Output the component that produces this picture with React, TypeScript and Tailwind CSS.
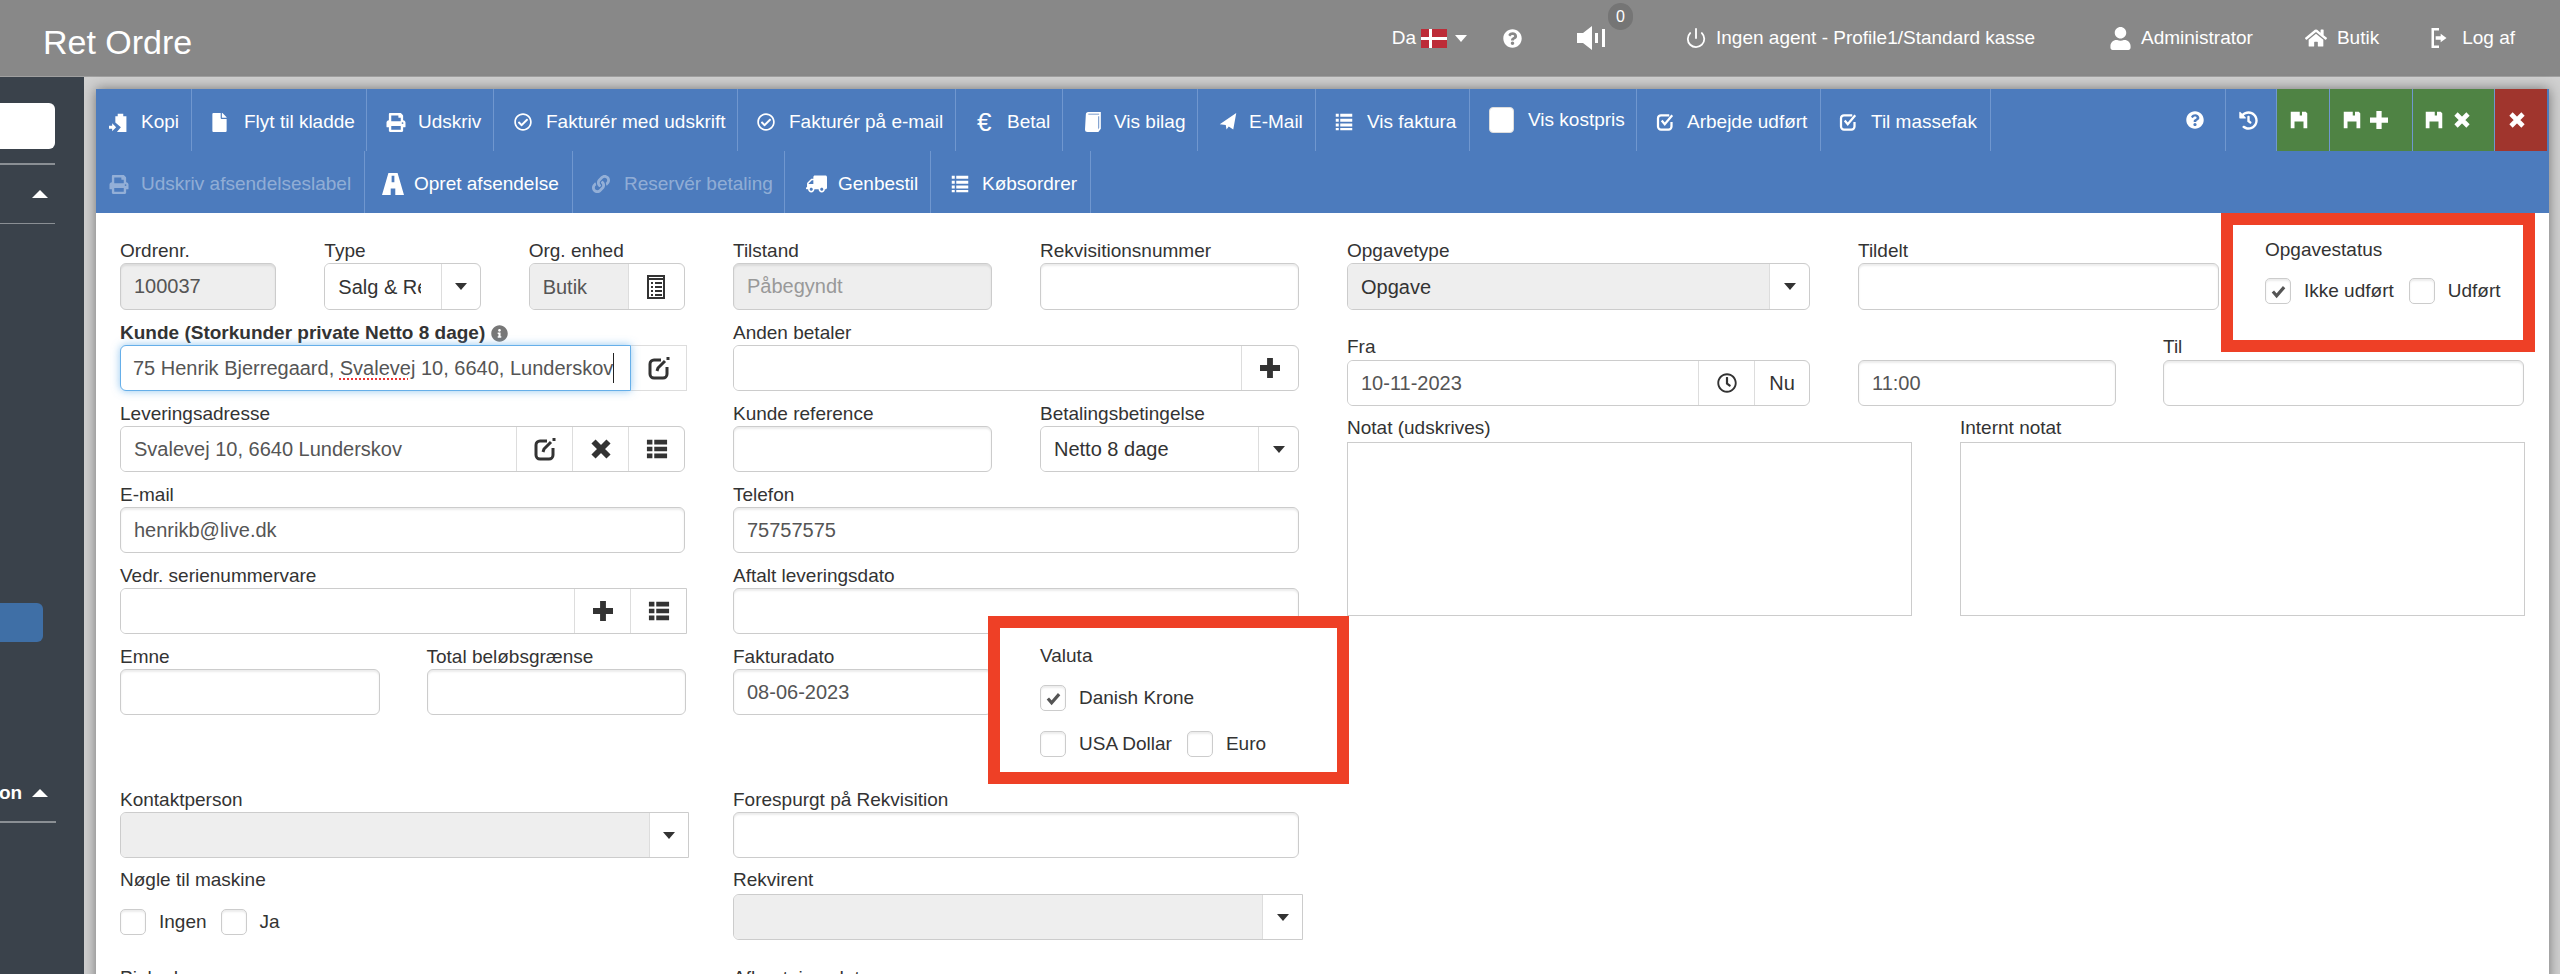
import React from "react";
import {
  FaFile, FaPrint, FaRegCheckCircle, FaLink, FaTruck, FaQuestionCircle,
  FaHistory, FaUser, FaHome, FaInfoCircle, FaRegClock,
} from "react-icons/fa";
import { Power } from "lucide-react";

type IconProps = { className?: string };

const Floppy = ({ className }: IconProps) => (
  <svg viewBox="0 0 24 24" className={className} fill="currentColor">
    <path fillRule="evenodd" d="M1 1h20l2 2v20h-5v-9H6v9H1zM13 1v5h3V1z" />
  </svg>
);
const Clip = ({ className }: IconProps) => (
  <svg viewBox="0 0 24 24" className={className} fill="currentColor">
    <path d="M8 4h3V1h7v3h4v20H10l5-6-7-6zM0 16h4v-3l5 5-5 5v-3H0z" />
  </svg>
);
const Book = ({ className }: IconProps) => (
  <svg viewBox="0 0 20 24" className={className} fill="currentColor">
    <path fillRule="evenodd" d="M2 3a3 3 0 0 1 3-3h15v20l-3 4H4a3 3 0 0 1-3-3zM18 2H5v1h13zM18 5v14l-1 2V5z" />
  </svg>
);
const Road = ({ className }: IconProps) => (
  <svg viewBox="0 0 24 24" className={className} fill="currentColor">
    <path fillRule="evenodd" d="M7 0h10l7 24h-9.500v-7h-5v7H0zM10.500 3h3v7h-3z" />
  </svg>
);
const Send = ({ className }: IconProps) => (
  <svg viewBox="0 0 24 24" className={className} fill="currentColor">
    <path d="M23 0 L1 15 L9 16 L10 22 L13 18 L19 22 Z" />
  </svg>
);
const Lines = ({ className }: IconProps) => (
  <svg viewBox="0 0 24 24" className={className} fill="currentColor">
    <path d="M1 1h4v4H1zM7 1h16v4H7zM1 7.500h4v4H1zM7 7.500h16v4H7zM1 14h4v4H1zM7 14h16v4H7zM1 20h4v3H1zM7 20h16v3H7z" />
  </svg>
);
const ThList = ({ className }: IconProps) => (
  <svg viewBox="0 0 24 24" className={className} fill="currentColor">
    <path d="M1 2h6v5H1zM9 2h14v5H9zM1 9.500h6v5H1zM9 9.500h14v5H9zM1 17h6v5H1zM9 17h14v5H9z" />
  </svg>
);
const CheckBoxIcon = ({ className }: IconProps) => (
  <svg viewBox="0 0 24 24" className={className} fill="none" stroke="currentColor" strokeWidth="3">
    <path d="M17 3H6a4 4 0 0 0-4 4v11a4 4 0 0 0 4 4h10a4 4 0 0 0 4-4v-6" />
    <path d="M7 10l4 5 10-12" />
  </svg>
);
const EditIcon = ({ className }: IconProps) => (
  <svg viewBox="0 0 24 24" className={className} fill="none" stroke="currentColor" strokeWidth="3">
    <path d="M14 4H7a4 4 0 0 0-4 4v10a4 4 0 0 0 4 4h9a4 4 0 0 0 4-4v-7" />
    <path d="M10 15l1-3 7-7" />
    <path d="M21 1v3" />
  </svg>
);
const OrgIcon = ({ className }: IconProps) => (
  <svg viewBox="0 0 20 24" className={className} fill="none" stroke="currentColor" strokeWidth="2">
    <path d="M2 1h16v22H2z" />
    <path d="M2 4h16M5 8h2M9 8h7M5 12h2M9 12h7M5 16h2M9 16h7M5 20h2M9 20h7" />
  </svg>
);
const Speaker = ({ className }: IconProps) => (
  <svg viewBox="0 0 28 24" className={className} fill="currentColor">
    <path d="M0 7h6l9-7v24l-9-7H0zM18 7h3v10h-3zM25 3h3v18h-3z" />
  </svg>
);
const LogOut = ({ className }: IconProps) => (
  <svg viewBox="0 0 24 24" className={className} fill="currentColor">
    <path d="M3 0h9v3H6v18h6v3H3zM14 7l7 5-7 5v-3H8v-4h6z" />
  </svg>
);
const XIcon = ({ className }: IconProps) => (
  <svg viewBox="0 0 24 24" className={className} fill="none" stroke="currentColor" strokeWidth="7">
    <path d="M3 3l18 18M21 3L3 21" />
  </svg>
);
const PlusIcon = ({ className }: IconProps) => (
  <svg viewBox="0 0 24 24" className={className} fill="none" stroke="currentColor" strokeWidth="7">
    <path d="M12 0v24M0 12h24" />
  </svg>
);
const Tick = ({ className }: IconProps) => (
  <svg viewBox="0 0 24 24" className={className} fill="none" stroke="currentColor" strokeWidth="5">
    <path d="M3 12l6 7L21 5" />
  </svg>
);
const Caret = ({ className = "border-t-[#333]" }: IconProps) => (
  <span className={`block w-0 h-0 border-x-[6px] border-x-transparent border-t-[7px] ${className}`} />
);
const CaretUp = () => <span className="block w-0 h-0 border-x-[8px] border-x-transparent border-b-[8px] border-b-white" />;

type Tool = { w: string; pl: string; label: string; icon: React.ReactNode; muted?: boolean; slot?: string };

const row1: Tool[] = [
  { w: "w-[96px]", pl: "pl-[13px]", label: "Kopi", icon: <Clip className="w-[19px] h-[19px]" /> },
  { w: "w-[175px]", pl: "pl-[20px]", label: "Flyt til kladde", icon: <FaFile className="w-[15px] h-[19px]" /> },
  { w: "w-[127px]", pl: "pl-[19px]", label: "Udskriv", icon: <FaPrint className="w-[20px] h-[19px]" /> },
  { w: "w-[244px]", pl: "pl-[20px]", label: "Fakturér med udskrift", icon: <FaRegCheckCircle className="w-[18px] h-[18px]" /> },
  { w: "w-[218px]", pl: "pl-[19px]", label: "Fakturér på e-mail", icon: <FaRegCheckCircle className="w-[18px] h-[18px]" /> },
  { w: "w-[107px]", pl: "pl-[21px]", label: "Betal", slot: "w-[30px]", icon: <span className="text-[26px] leading-none">€</span> },
  { w: "w-[135px]", pl: "pl-[21px]", label: "Vis bilag", slot: "w-[30px]", icon: <Book className="w-[17px] h-[20px]" /> },
  { w: "w-[118px]", pl: "pl-[20px]", label: "E-Mail", slot: "w-[31px]", icon: <Send className="w-[20px] h-[18px]" /> },
  { w: "w-[154px]", pl: "pl-[18px]", label: "Vis faktura", slot: "w-[33px]", icon: <Lines className="w-[20px] h-[18px]" /> },
];
const row2: Tool[] = [
  { w: "w-[269px]", pl: "pl-[13px]", label: "Udskriv afsendelseslabel", muted: true, icon: <FaPrint className="w-[20px] h-[19px]" /> },
  { w: "w-[208px]", pl: "pl-[17px]", label: "Opret afsendelse", icon: <Road className="w-[22px] h-[24px]" /> },
  { w: "w-[212px]", pl: "pl-[19px]", label: "Reservér betaling", muted: true, icon: <FaLink className="w-[18px] h-[18px]" /> },
  { w: "w-[146px]", pl: "pl-[21px]", label: "Genbestil", icon: <FaTruck className="w-[21px] h-[18px] -scale-x-100" /> },
  { w: "w-[160px]", pl: "pl-[19px]", label: "Købsordrer", icon: <Lines className="w-[20px] h-[18px]" /> },
];

const ToolBtn = ({ t }: { t: Tool }) => (
  <div className={`flex items-center h-full shrink-0 border-r-[1.5px] border-[#7097cf] pt-[4px] ${t.w} ${t.pl} ${t.muted ? "text-white/40" : "text-white"}`}>
    <span className={`flex items-center shrink-0 ${t.slot ?? "w-[32px]"}`}>{t.icon}</span>
    <span className="whitespace-nowrap">{t.label}</span>
  </div>
);

const Label = ({ children, bold }: { children?: React.ReactNode; bold?: boolean }) => (
  <div className={`h-[26px] leading-[28px] whitespace-nowrap text-[#333] ${bold ? "font-bold" : ""}`}>{children}</div>
);

const box = "border-[1.5px] border-[#ccc] shadow-[inset_0_2px_2px_rgba(0,0,0,0.08)]";

const Input = ({ value, disabled, tall, muted }: { value?: string; disabled?: boolean; tall?: boolean; muted?: boolean }) => (
  <input
    readOnly
    value={value ?? ""}
    className={`block w-full px-[13px] text-[20px] rounded-[6px] outline-none ${box} ${tall ? "h-[47px]" : "h-[46px]"} ${disabled ? "bg-[#eee]" : "bg-white"} ${muted ? "text-[#999]" : "text-[#555]"}`}
  />
);

const Addon = ({ children, w, last }: { children?: React.ReactNode; w: string; last?: boolean }) => (
  <div className={`flex items-center justify-center shrink-0 h-full bg-white text-[20px] text-[#333] border-l-[1.5px] border-[#ddd] ${w} ${last ? "rounded-r-[6px]" : ""}`}>{children}</div>
);

const Group = ({ value, disabled, tall, dark, children, square }: { value?: string; disabled?: boolean; tall?: boolean; dark?: boolean; children?: React.ReactNode; square?: boolean }) => (
  <div className={`flex w-full overflow-hidden ${box} ${square ? "rounded-l-[6px]" : "rounded-[6px]"} ${tall ? "h-[47px]" : "h-[46px]"}`}>
    <div className={`flex-1 min-w-0 h-full flex items-center pl-[13px] pr-[20px] text-[20px] ${disabled ? "bg-[#eee]" : "bg-white"}`}>
      <span className={`block overflow-hidden whitespace-nowrap w-full ${dark ? "text-[#333]" : "text-[#555]"}`}>{value}</span>
    </div>
    {children}
  </div>
);

const Check = ({ label, checked }: { label: string; checked?: boolean }) => (
  <div className="flex items-center h-[26px]">
    <span className={`flex items-center justify-center w-[26px] h-[26px] rounded-[5px] bg-white text-[#555] ${box}`}>
      {checked && <Tick className="w-[15px] h-[15px]" />}
    </span>
    <span className="ml-[13px] text-[#333] whitespace-nowrap">{label}</span>
  </div>
);

const Field = ({ children }: { children: React.ReactNode }) => <div className="mb-[9px] min-w-0">{children}</div>;

export default function App() {
  return (
    <div className="w-[2560px] h-[974px] overflow-hidden flex flex-col bg-[#d0d0d0] text-[19px] font-['Liberation_Sans',Arial,sans-serif]">
      {/* header */}
      <header className="h-[77px] shrink-0 flex items-center bg-[#888888] text-white border-b border-[#a0a0a0]">
        <h1 className="ml-[43px] pt-[8px] text-[34px] leading-none font-normal">Ret Ordre</h1>
        <div className="ml-auto flex items-center pr-[45px] relative text-[19px]">
          <span>Da</span>
          <span className="ml-[5px] w-[26px] h-[19px] bg-[#bd2c38] relative flex items-center justify-center">
            <span className="absolute left-[8px] top-0 bottom-0 w-[3px] bg-white" />
            <span className="absolute left-0 right-0 top-[8px] h-[3px] bg-white" />
          </span>
          <Caret className="ml-[8px] border-t-white" />
          <FaQuestionCircle className="ml-[36px] w-[19px] h-[19px]" />
          <span className="ml-[55px] relative">
            <Speaker className="w-[28px] h-[24px] block" />
            <span className="absolute left-[31px] top-[-23px] w-[25px] h-[27px] rounded-full bg-[#757575] text-[16px] leading-[27px] text-center">0</span>
          </span>
          <Power className="ml-[80px] w-[22px] h-[24px]" strokeWidth={2} />
          <span className="ml-[9px]">Ingen agent - Profile1/Standard kasse</span>
          <FaUser className="ml-[74px] w-[23px] h-[23px]" />
          <span className="ml-[9px]">Administrator</span>
          <FaHome className="ml-[52px] w-[22px] h-[22px]" />
          <span className="ml-[10px]">Butik</span>
          <LogOut className="ml-[50px] w-[20px] h-[24px]" />
          <span className="ml-[13px]">Log af</span>
        </div>
      </header>

      <div className="flex flex-1 min-h-0">
        {/* sidebar */}
        <aside className="w-[84px] shrink-0 bg-[#3a424b] flex flex-col text-white">
          <div className="mt-[26px] w-[55px] h-[46px] bg-white rounded-r-[6px]" />
          <div className="mt-[14px] w-[55px] h-[1.5px] bg-[#8a8f94]" />
          <div className="h-[58px] flex items-center pl-[32px]"><CaretUp /></div>
          <div className="w-[55px] h-[1.5px] bg-[#8a8f94]" />
          <div className="mt-[379px] w-[43px] h-[39px] bg-[#3f6fa6] rounded-r-[6px]" />
          <div className="mt-[138px] flex items-center font-bold text-[19px] leading-[26px]">
            <span className="-ml-[1px] w-[33px] text-right pr-[10px]">on</span>
            <CaretUp />
          </div>
          <div className="mt-[15px] w-[56px] h-[1.5px] bg-[#8a8f94]" />
        </aside>

        {/* main */}
        <main className="flex-1 min-w-0 pt-[12px] pl-[12px] pr-[11px]">
          <div className="relative h-[900px] bg-white shadow-[0_0_12px_rgba(0,0,0,0.45)]">
            {/* toolbar */}
            <div className="bg-[#4c7bbd] h-[124px] flex flex-col">
              <div className="h-[62px] flex items-stretch">
                {row1.map((t) => <ToolBtn key={t.label} t={t} />)}
                <div className="w-[167px] h-full shrink-0 flex items-center pl-[19px] text-white border-r-[1.5px] border-[#7097cf]">
                  <span className="block w-[25px] h-[26px] bg-white rounded-[4px] border border-[#ddd] shrink-0" />
                  <span className="ml-[14px] whitespace-nowrap">Vis kostpris</span>
                </div>
                <ToolBtn t={{ w: "w-[184px]", pl: "pl-[19px]", slot: "w-[31px]", label: "Arbejde udført", icon: <CheckBoxIcon className="w-[19px] h-[18px]" /> }} />
                <ToolBtn t={{ w: "w-[170px]", pl: "pl-[18px]", label: "Til massefak", icon: <CheckBoxIcon className="w-[19px] h-[18px]" /> }} />
                <div className="w-[182px] shrink-0 h-full" />
                <div className="w-[52px] shrink-0 flex items-center text-white pl-[13px]"><FaQuestionCircle className="w-[18px] h-[18px]" /></div>
                <div className="w-[52px] shrink-0 flex items-center text-white pl-[13px] border-l-[1.5px] border-r-[1.5px] border-[#7097cf]"><FaHistory className="w-[19px] h-[19px]" /></div>
                <div className="w-[53px] shrink-0 flex items-center bg-[#4f8344] text-white pl-[13px] border-r-[1.5px] border-[#7097cf]"><Floppy className="w-[18px] h-[18px]" /></div>
                <div className="w-[83px] shrink-0 flex items-center gap-[9px] bg-[#4f8344] text-white pl-[13px] border-r-[1.5px] border-[#7097cf]"><Floppy className="w-[18px] h-[18px]" /><PlusIcon className="w-[18px] h-[18px]" /></div>
                <div className="w-[82px] shrink-0 flex items-center gap-[11px] bg-[#4f8344] text-white pl-[12px] border-r-[1.5px] border-[#7097cf]"><Floppy className="w-[18px] h-[18px]" /><XIcon className="w-[16px] h-[16px]" /></div>
                <div className="w-[52px] shrink-0 flex items-center bg-[#a0352d] text-white pl-[14px]"><XIcon className="w-[16px] h-[16px]" /></div>
              </div>
              <div className="h-[62px] flex items-stretch">
                {row2.map((t) => <ToolBtn key={t.label} t={t} />)}
              </div>
            </div>

            {/* form */}
            <div className="flex pt-[24px] pl-[24px] gap-[44px]">
              {/* column 1 */}
              <div className="w-[569px] shrink-0">
                <div className="w-[565px] grid grid-cols-3 gap-x-[48px]">
                  <Field><Label>Ordrenr.</Label><Input tall disabled value="100037" /></Field>
                  <Field>
                    <Label>Type</Label>
                    <Group tall dark value="Salg & Reparation"><Addon last w="w-[39px]"><Caret /></Addon></Group>
                  </Field>
                  <Field>
                    <Label>Org. enhed</Label>
                    <Group tall disabled value="Butik"><Addon last w="w-[56px]"><OrgIcon className="w-[20px] h-[24px]" /></Addon></Group>
                  </Field>
                </div>

                <Field>
                  <Label bold>
                    <span className="flex items-center">Kunde (Storkunder private Netto 8 dage)<FaInfoCircle className="ml-[6px] w-[17px] h-[17px] text-[#777]" /></span>
                  </Label>
                  <div className="flex w-[567px] h-[46px]">
                    <div className="flex-1 min-w-0 h-full flex items-center pl-[12px] pr-[6px] rounded-l-[6px] border-[1.5px] border-[#66afe9] shadow-[0_0_8px_rgba(102,175,233,0.7)] bg-white relative z-10 text-[20px] text-[#555]">
                      <span className="block whitespace-nowrap overflow-hidden border-r border-[#222]">75 Henrik Bjerregaard, <span className="underline decoration-dotted decoration-[#e33] decoration-2 underline-offset-[3px]">Svalevej</span> 10, 6640, Lunderskov</span>
                    </div>
                    <div className="w-[56px] shrink-0 flex items-center justify-center border-y-[1.5px] border-r-[1.5px] border-[#ddd] text-[#333]"><EditIcon className="w-[24px] h-[24px]" /></div>
                  </div>
                </Field>

                <div className="w-[565px]">
                  <Field>
                    <Label>Leveringsadresse</Label>
                    <Group value="Svalevej 10, 6640 Lunderskov">
                      <Addon w="w-[56px]"><EditIcon className="w-[24px] h-[24px]" /></Addon>
                      <Addon w="w-[56px]"><XIcon className="w-[20px] h-[20px]" /></Addon>
                      <Addon last w="w-[56px]"><ThList className="w-[24px] h-[22px]" /></Addon>
                    </Group>
                  </Field>
                  <Field><Label>E-mail</Label><Input value="henrikb@live.dk" /></Field>
                </div>

                <div className="w-[567px]">
                  <Field>
                    <Label>Vedr. serienummervare</Label>
                    <Group square>
                      <Addon w="w-[56px]"><PlusIcon className="w-[20px] h-[20px]" /></Addon>
                      <Addon w="w-[56px]"><ThList className="w-[24px] h-[22px]" /></Addon>
                    </Group>
                  </Field>
                </div>

                <div className="w-[566px] grid grid-cols-2 gap-x-[47px]">
                  <Field><Label>Emne</Label><Input /></Field>
                  <Field><Label>Total beløbsgrænse</Label><Input /></Field>
                </div>

                <div className="mt-[62px] mb-[8px]">
                  <Label>Kontaktperson</Label>
                  <Group disabled square><Addon w="w-[39px]"><Caret /></Addon></Group>
                </div>
                <Label>Nøgle til maskine</Label>
                <div className="mt-[17px] flex gap-[14px]">
                  <Check label="Ingen" />
                  <Check label="Ja" />
                </div>
                <div className="mt-[29px]"><Label>Pinkode</Label></div>
              </div>

              {/* column 2 */}
              <div className="w-[570px] shrink-0">
                <div className="w-[566px]">
                  <div className="grid grid-cols-2 gap-x-[48px]">
                    <Field><Label>Tilstand</Label><Input tall disabled muted value="Påbegyndt" /></Field>
                    <Field><Label>Rekvisitionsnummer</Label><Input tall /></Field>
                  </div>
                  <Field>
                    <Label>Anden betaler</Label>
                    <Group><Addon last w="w-[57px]"><PlusIcon className="w-[20px] h-[20px]" /></Addon></Group>
                  </Field>
                  <div className="grid grid-cols-2 gap-x-[48px]">
                    <Field><Label>Kunde reference</Label><Input /></Field>
                    <Field>
                      <Label>Betalingsbetingelse</Label>
                      <Group dark value="Netto 8 dage"><Addon last w="w-[40px]"><Caret /></Addon></Group>
                    </Field>
                  </div>
                  <Field><Label>Telefon</Label><Input value="75757575" /></Field>
                  <Field><Label>Aftalt leveringsdato</Label><Input /></Field>
                  <div className="w-[259px]">
                    <Field><Label>Fakturadato</Label><Input value="08-06-2023" /></Field>
                  </div>
                  <div className="mt-[71px] mb-[8px]">
                    <Label>Forespurgt på Rekvisition</Label>
                    <Input />
                  </div>
                </div>
                <Label>Rekvirent</Label>
                <div className="mt-[2px]">
                  <Group disabled square><Addon w="w-[40px]"><Caret /></Addon></Group>
                </div>
                <div className="mt-[24px]"><Label>Afhentningsdato</Label></div>
              </div>

              {/* column 3 */}
              <div className="w-[1178px] shrink-0">
                <div className="flex gap-[48px]">
                  <div className="w-[463px]">
                    <Label>Opgavetype</Label>
                    <Group tall disabled dark value="Opgave"><Addon last w="w-[40px]"><Caret /></Addon></Group>
                  </div>
                  <div className="w-[361px]">
                    <Label>Tildelt</Label>
                    <Input tall />
                  </div>
                </div>

                <div className="mt-[23px] flex gap-[48px]">
                  <div className="w-[463px]">
                    <div className="h-[27px]"><Label>Fra</Label></div>
                    <Group value="10-11-2023">
                      <Addon w="w-[56px]"><FaRegClock className="w-[20px] h-[20px]" /></Addon>
                      <Addon last w="w-[55px]">Nu</Addon>
                    </Group>
                  </div>
                  <div className="w-[258px]">
                    <div className="h-[27px]" />
                    <Input value="11:00" />
                  </div>
                  <div className="w-[361px] -ml-[1px]">
                    <div className="h-[27px]"><Label>Til</Label></div>
                    <Input />
                  </div>
                </div>

                <div className="mt-[8px] flex gap-[48px]">
                  <div className="w-[565px]">
                    <div className="h-[28px]"><Label>Notat (udskrives)</Label></div>
                    <div className="h-[174px] border-[1.5px] border-[#ccc] bg-white" />
                  </div>
                  <div className="w-[565px]">
                    <div className="h-[28px]"><Label>Internt notat</Label></div>
                    <div className="h-[174px] border-[1.5px] border-[#ccc] bg-white" />
                  </div>
                </div>
              </div>
            </div>

            {/* annotation boxes */}
            <div className="absolute left-[2125px] top-[124px] w-[314px] h-[139px] border-[12px] border-[#ee4026] bg-white pl-[32px] pt-[11px]">
              <Label>Opgavestatus</Label>
              <div className="mt-[16px] flex gap-[15px]">
                <Check label="Ikke udført" checked />
                <Check label="Udført" />
              </div>
            </div>
            <div className="absolute left-[892px] top-[527px] w-[361px] h-[168px] border-[12px] border-[#ee4026] bg-white pl-[40px] pt-[14px]">
              <Label>Valuta</Label>
              <div className="mt-[17px]"><Check label="Danish Krone" checked /></div>
              <div className="mt-[20px] flex gap-[15px]">
                <Check label="USA Dollar" />
                <Check label="Euro" />
              </div>
            </div>
          </div>
        </main>
      </div>
    </div>
  );
}
